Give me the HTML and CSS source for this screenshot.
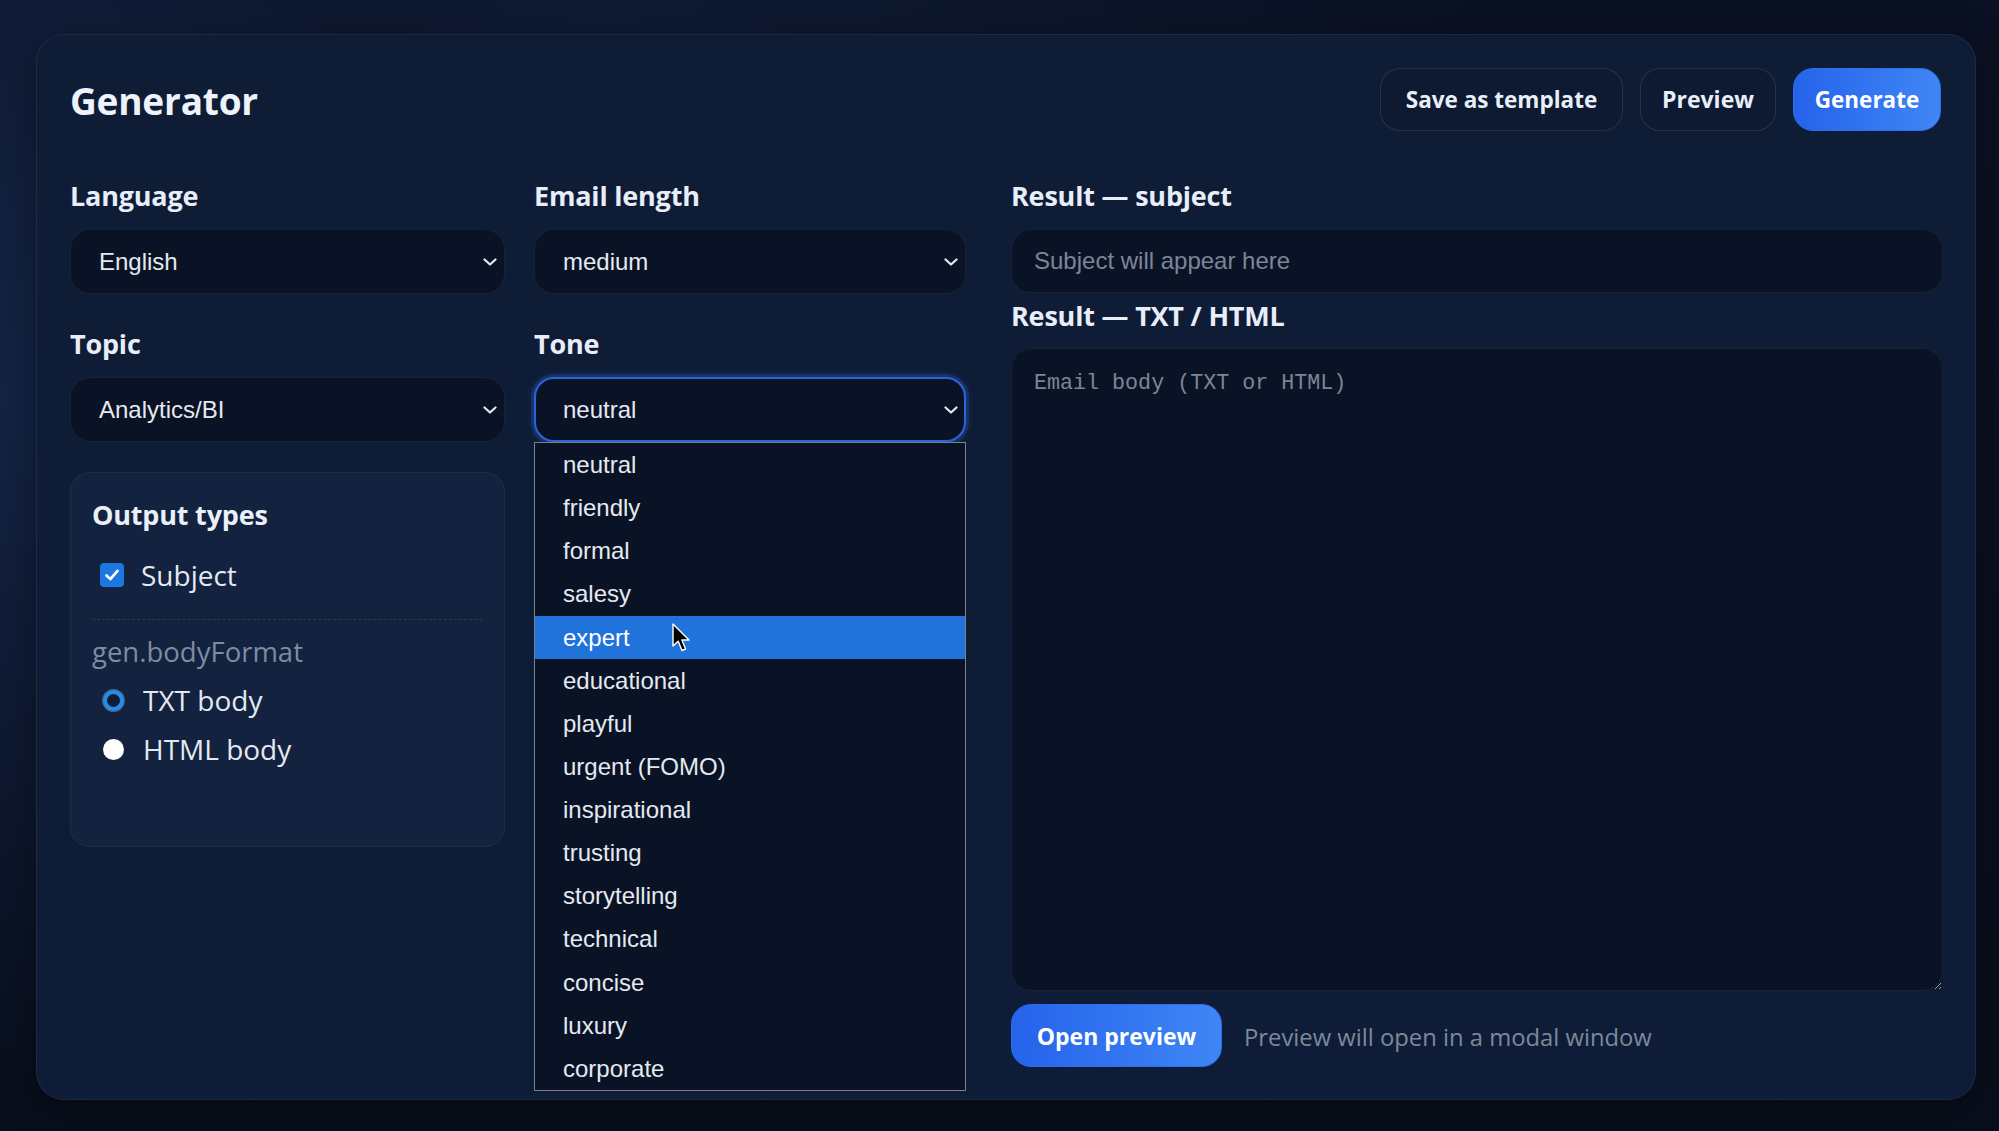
FILE: index.html
```html
<!DOCTYPE html>
<html lang="en">
<head>
<meta charset="utf-8">
<title>Generator</title>
<link rel="stylesheet" href="styles.css">
</head>
<body>
<main class="card">
  <header class="card-head">
    <h1 class="title">Generator</h1>
    <div class="actions">
      <button class="btn btn-ghost btn-save" type="button">Save as template</button>
      <button class="btn btn-ghost btn-preview" type="button">Preview</button>
      <button class="btn btn-primary btn-generate" type="button">Generate</button>
    </div>
  </header>

  <div class="layout">
    <div class="settings">
      <div class="field">
        <div class="label">Language</div>
        <div class="select"><span>English</span><svg class="chev" viewBox="0 0 14 8"><path d="M1.5 1.5 L7 6.5 L12.5 1.5"/></svg></div>
      </div>
      <div class="field">
        <div class="label">Email length</div>
        <div class="select"><span>medium</span><svg class="chev" viewBox="0 0 14 8"><path d="M1.5 1.5 L7 6.5 L12.5 1.5"/></svg></div>
      </div>
      <div class="field">
        <div class="label">Topic</div>
        <div class="select"><span>Analytics/BI</span><svg class="chev" viewBox="0 0 14 8"><path d="M1.5 1.5 L7 6.5 L12.5 1.5"/></svg></div>
      </div>
      <div class="field field-open">
        <div class="label">Tone</div>
        <div class="select select-focus"><span>neutral</span><svg class="chev" viewBox="0 0 14 8"><path d="M1.5 1.5 L7 6.5 L12.5 1.5"/></svg></div>
        <ul class="dropdown">
          <li>neutral</li>
          <li>friendly</li>
          <li>formal</li>
          <li>salesy</li>
          <li class="active">expert</li>
          <li>educational</li>
          <li>playful</li>
          <li>urgent (FOMO)</li>
          <li>inspirational</li>
          <li>trusting</li>
          <li>storytelling</li>
          <li>technical</li>
          <li>concise</li>
          <li>luxury</li>
          <li>corporate</li>
        </ul>
      </div>

      <section class="panel">
        <div class="panel-title">Output types</div>
        <div class="opt opt-check">
          <span class="checkbox"><svg viewBox="0 0 24 24"><path d="M6 12.5 L10.2 16.5 L18 7.5"/></svg></span>
          <span>Subject</span>
        </div>
        <div class="divider"></div>
        <div class="muted">gen.bodyFormat</div>
        <div class="opt opt-radio">
          <span class="radio radio-on"></span>
          <span>TXT body</span>
        </div>
        <div class="opt opt-radio">
          <span class="radio"></span>
          <span>HTML body</span>
        </div>
      </section>
    </div>

    <div class="results">
      <div class="label">Result — subject</div>
      <input class="input" type="text" placeholder="Subject will appear here">
      <div class="label label-body">Result — TXT / HTML</div>
      <textarea class="textarea" placeholder="Email body (TXT or HTML)"></textarea>
      <div class="preview-row">
        <button class="btn btn-primary btn-open" type="button">Open preview</button>
        <span class="hint">Preview will open in a modal window</span>
      </div>
    </div>
  </div>
</main>

<svg class="cursor" viewBox="0 0 20 30" width="20" height="30">
  <path d="M1 1 L1 23 L6.2 18.2 L10 27.5 L13.6 26 L9.9 17 L17 17 Z" fill="#000" stroke="#fff" stroke-width="1.4" stroke-linejoin="round"/>
</svg>
</body>
</html>
```

FILE: styles.css
```css
* {
  box-sizing: border-box;
}

html, body {
  height: 100%;
}

body {
  margin: 0;
  padding: 34px 23px 0 36px;
  font-family: "Open Sans", "Noto Sans", sans-serif;
  color: #e7edf7;
  color-scheme: dark;
  background:
    radial-gradient(ellipse 420px 700px at 0% 35%, rgba(28, 52, 100, 0.55) 0%, rgba(28, 52, 100, 0) 100%),
    radial-gradient(ellipse 900px 500px at 30% 0%, rgba(20, 36, 70, 0.5) 0%, rgba(20, 36, 70, 0) 100%),
    linear-gradient(180deg, #0a1122 0%, #080e1c 100%);
  overflow: hidden;
  position: relative;
}

.card {
  width: 1940px;
  padding: 34px 34px 32px 33px;
  background: linear-gradient(180deg, #0f1c36 0%, #0e1c37 100%);
  border: 1px solid rgba(148, 163, 184, 0.10);
  border-radius: 28px;
  box-shadow: 0 10px 40px rgba(0, 0, 0, 0.35);
}

.card-head {
  display: flex;
  align-items: center;
  justify-content: space-between;
  height: 63px;
}

.title {
  margin: 0;
  font-size: 37px;
  font-weight: 700;
  line-height: 63px;
  color: #eef3fb;
  letter-spacing: -0.2px;
}

.actions {
  display: flex;
  gap: 17px;
  margin-top: -3px;
}

.btn {
  height: 63px;
  padding: 0;
  border-radius: 20px;
  font-family: "Open Sans", "Noto Sans", sans-serif;
  font-size: 23px;
  font-weight: 700;
  color: #e9eff9;
  cursor: pointer;
}

.btn-save {
  width: 243px;
  font-size: 22.5px;
}

.btn-preview {
  width: 136px;
}

.btn-generate {
  width: 148px;
  font-size: 22.5px;
}

.btn-ghost {
  background: #0d1a32;
  border: 1px solid rgba(148, 163, 184, 0.18);
}

.btn-primary {
  background: linear-gradient(90deg, #2563eb 0%, #3f86f5 100%);
  border: 1px solid #2b6ef0;
  color: #ffffff;
}

.layout {
  display: grid;
  grid-template-columns: 896px 932px;
  column-gap: 45px;
  margin-top: 47px;
  align-items: start;
}

.settings {
  display: grid;
  grid-template-columns: 435px 432px;
  column-gap: 29px;
  row-gap: 33px;
  align-items: start;
}

.field {
  display: flex;
  flex-direction: column;
}

.field-open {
  position: relative;
}

.label {
  font-size: 27px;
  font-weight: 700;
  line-height: 34px;
  margin-bottom: 16px;
  color: #e8eef9;
  letter-spacing: -0.2px;
}

.select {
  display: flex;
  align-items: center;
  justify-content: space-between;
  height: 65px;
  padding: 0 7px 0 28px;
  background: #0a1326;
  border: 1px solid rgba(148, 163, 184, 0.10);
  border-radius: 20px;
  font-family: "Liberation Sans", Arial, sans-serif;
  font-size: 24px;
  color: #e5e9f0;
}

.select-focus {
  border: 2px solid #2d63d8;
  padding-left: 27px;
  padding-right: 6px;
  box-shadow: 0 0 0 3px rgba(45, 99, 216, 0.22), 0 0 10px rgba(59, 130, 246, 0.25);
}

.chev {
  width: 14px;
  height: 8px;
  fill: none;
  stroke: #e5e9f0;
  stroke-width: 2.2;
  stroke-linecap: round;
  stroke-linejoin: round;
}

.dropdown {
  position: absolute;
  top: 100%;
  left: 0;
  width: 432px;
  margin: 0;
  padding: 0;
  list-style: none;
  background: #0a1326;
  border: 1px solid #7b818c;
  z-index: 5;
}

.dropdown li {
  height: 43.13px;
  line-height: 43.13px;
  padding-left: 28px;
  font-family: "Liberation Sans", Arial, sans-serif;
  font-size: 24px;
  color: #e5e9f0;
}

.dropdown li.active {
  background: #1f73db;
  color: #ffffff;
}

.panel {
  grid-column: 1;
  min-height: 375px;
  margin-top: -3px;
  padding: 25px 22px 20px 21px;
  background: #13223e;
  border: 1px solid rgba(148, 163, 184, 0.08);
  border-radius: 20px;
}

.panel-title {
  font-size: 27px;
  font-weight: 700;
  line-height: 34px;
  color: #eaf0fa;
  letter-spacing: -0.2px;
}

.opt {
  display: flex;
  align-items: center;
  height: 38px;
  font-size: 28px;
  color: #e3e9f3;
}

.opt-check {
  margin-top: 24px;
  gap: 17px;
  padding-left: 8px;
}

.opt-radio {
  margin-top: 11px;
  gap: 19px;
  padding-left: 11px;
}

.checkbox {
  width: 24px;
  height: 24px;
  border-radius: 4px;
  background: #1c78e0;
  display: flex;
  align-items: center;
  justify-content: center;
}

.checkbox svg {
  width: 22px;
  height: 22px;
  fill: none;
  stroke: #ffffff;
  stroke-width: 3;
  stroke-linecap: round;
  stroke-linejoin: round;
}

.radio {
  width: 21px;
  height: 21px;
  border-radius: 50%;
  background: #ffffff;
  flex: none;
}

.radio-on {
  background: #0f1d38;
  border: 4.5px solid #2a8be6;
  box-shadow: 0 0 0 1px rgba(160, 200, 250, 0.35);
}

.divider {
  margin-top: 25px;
  border-top: 1px dashed rgba(148, 163, 184, 0.18);
}

.muted {
  margin-top: 14px;
  font-size: 27.5px;
  line-height: 36px;
  color: #7f8ba1;
}

.results {
  display: flex;
  flex-direction: column;
}

.input {
  height: 64px;
  padding: 0 22px;
  background: #0a1326;
  border: 1px solid rgba(148, 163, 184, 0.10);
  border-radius: 20px;
  font-family: "Liberation Sans", Arial, sans-serif;
  font-size: 24px;
  color: #e5e9f0;
  outline: none;
}

.input::placeholder {
  color: #7c8596;
}

.label-body {
  margin-top: 6px;
  margin-bottom: 15px;
}

.textarea {
  height: 643px;
  padding: 22px;
  background: #0a1326;
  border: 1px solid rgba(148, 163, 184, 0.10);
  border-radius: 20px;
  font-family: "Liberation Mono", "DejaVu Sans Mono", monospace;
  font-size: 21.7px;
  line-height: 26px;
  color: #e5e9f0;
  resize: vertical;
  outline: none;
}

.textarea::placeholder {
  color: #7c8596;
}

.preview-row {
  display: flex;
  align-items: center;
  gap: 22px;
  margin-top: 13px;
}

.btn-open {
  width: 211px;
  padding: 0;
}

.hint {
  font-size: 23.8px;
  color: #7d889c;
  padding-top: 2px;
}

.cursor {
  position: absolute;
  left: 672px;
  top: 623px;
  z-index: 20;
}
```
